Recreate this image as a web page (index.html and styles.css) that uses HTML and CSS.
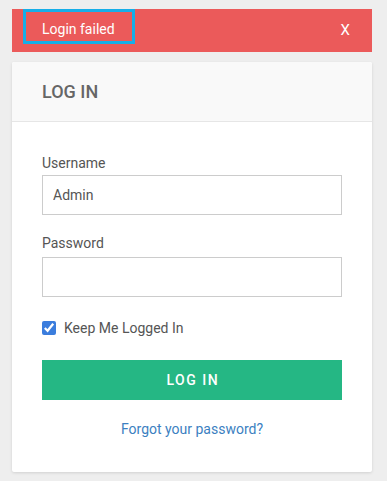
FILE: index.html
```html
<!DOCTYPE html>
<html>
<head>
<meta charset="utf-8">
<link rel="stylesheet" href="styles.css">
</head>
<body>
<div class="page">
  <div class="alert">
    <span class="alert-msg">Login failed</span>
    <span class="alert-close">X</span>
  </div>
  <div class="card">
    <div class="card-head">LOG IN</div>
    <form class="card-body">
      <label class="field-label">Username</label>
      <input class="field-input" type="text" value="Admin">
      <label class="field-label second">Password</label>
      <input class="field-input" type="password">
      <label class="check-row"><input class="check" type="checkbox" checked> Keep Me Logged In</label>
      <button class="btn" type="button">LOG IN</button>
      <a class="forgot" href="#">Forgot your password?</a>
    </form>
  </div>
</div>
</body>
</html>
```
FILE: styles.css
```css
html, body {
  margin: 0;
  padding: 0;
  background: #eeeeee;
  font-family: Roboto, "Liberation Sans", sans-serif;
}
.page {
  padding: 9px 15px 9px 12px;
  display: flex;
  flex-direction: column;
  gap: 10px;
}
.alert {
  height: 43px;
  background: #eb5a5a;
  display: flex;
  align-items: flex-start;
  justify-content: space-between;
  padding-left: 11px;
  padding-right: 22px;
  box-sizing: border-box;
  color: #fff;
  font-size: 14px;
}
.alert-msg {
  box-sizing: border-box;
  width: 112px;
  height: 35px;
  border: 3px solid #16aee8;
  padding-left: 16px;
  padding-top: 7px;
  line-height: 20px;
}
.alert-close {
  line-height: 20px;
  padding-top: 11px;
  font-size: 15px;
}
.card {
  background: #fff;
  border-radius: 2px;
  box-shadow: 0 1px 3px rgba(0,0,0,0.12);
  overflow: hidden;
}
.card-head {
  height: 60px;
  box-sizing: border-box;
  background: #f9f9f9;
  border-bottom: 1px solid #e6e6e6;
  padding-left: 30px;
  display: flex;
  align-items: center;
  font-size: 18px;
  font-weight: 500;
  color: #666;
}
.card-body {
  display: flex;
  flex-direction: column;
  padding: 31px 30px 33px 30px;
  margin: 0;
}
.field-label {
  font-size: 14px;
  line-height: 20px;
  color: #555;
  margin-bottom: 2px;
}
.field-label.second {
  margin-top: 18px;
  margin-bottom: 4px;
}
.field-input {
  box-sizing: border-box;
  width: 300px;
  height: 40px;
  border: 1px solid #cccccc;
  border-radius: 0;
  padding: 0 10px;
  font-family: inherit;
  font-size: 14px;
  color: #555;
  outline: none;
  margin: 0;
}
.check-row {
  display: flex;
  align-items: center;
  gap: 8px;
  margin-top: 21px;
  font-size: 14px;
  line-height: 20px;
  color: #555;
}
.check {
  width: 14px;
  height: 14px;
  margin: 0;
  accent-color: #3b7ddd;
}
.btn {
  margin-top: 22px;
  width: 300px;
  height: 40px;
  border: none;
  background: #25b784;
  color: #fff;
  font-family: inherit;
  font-size: 14px;
  font-weight: 500;
  letter-spacing: 1.5px;
  padding: 0;
  text-indent: 1.5px;
}
.forgot {
  margin-top: 19px;
  text-align: center;
  font-size: 14px;
  line-height: 20px;
  color: #3c7fc1;
  text-decoration: none;
}
```
